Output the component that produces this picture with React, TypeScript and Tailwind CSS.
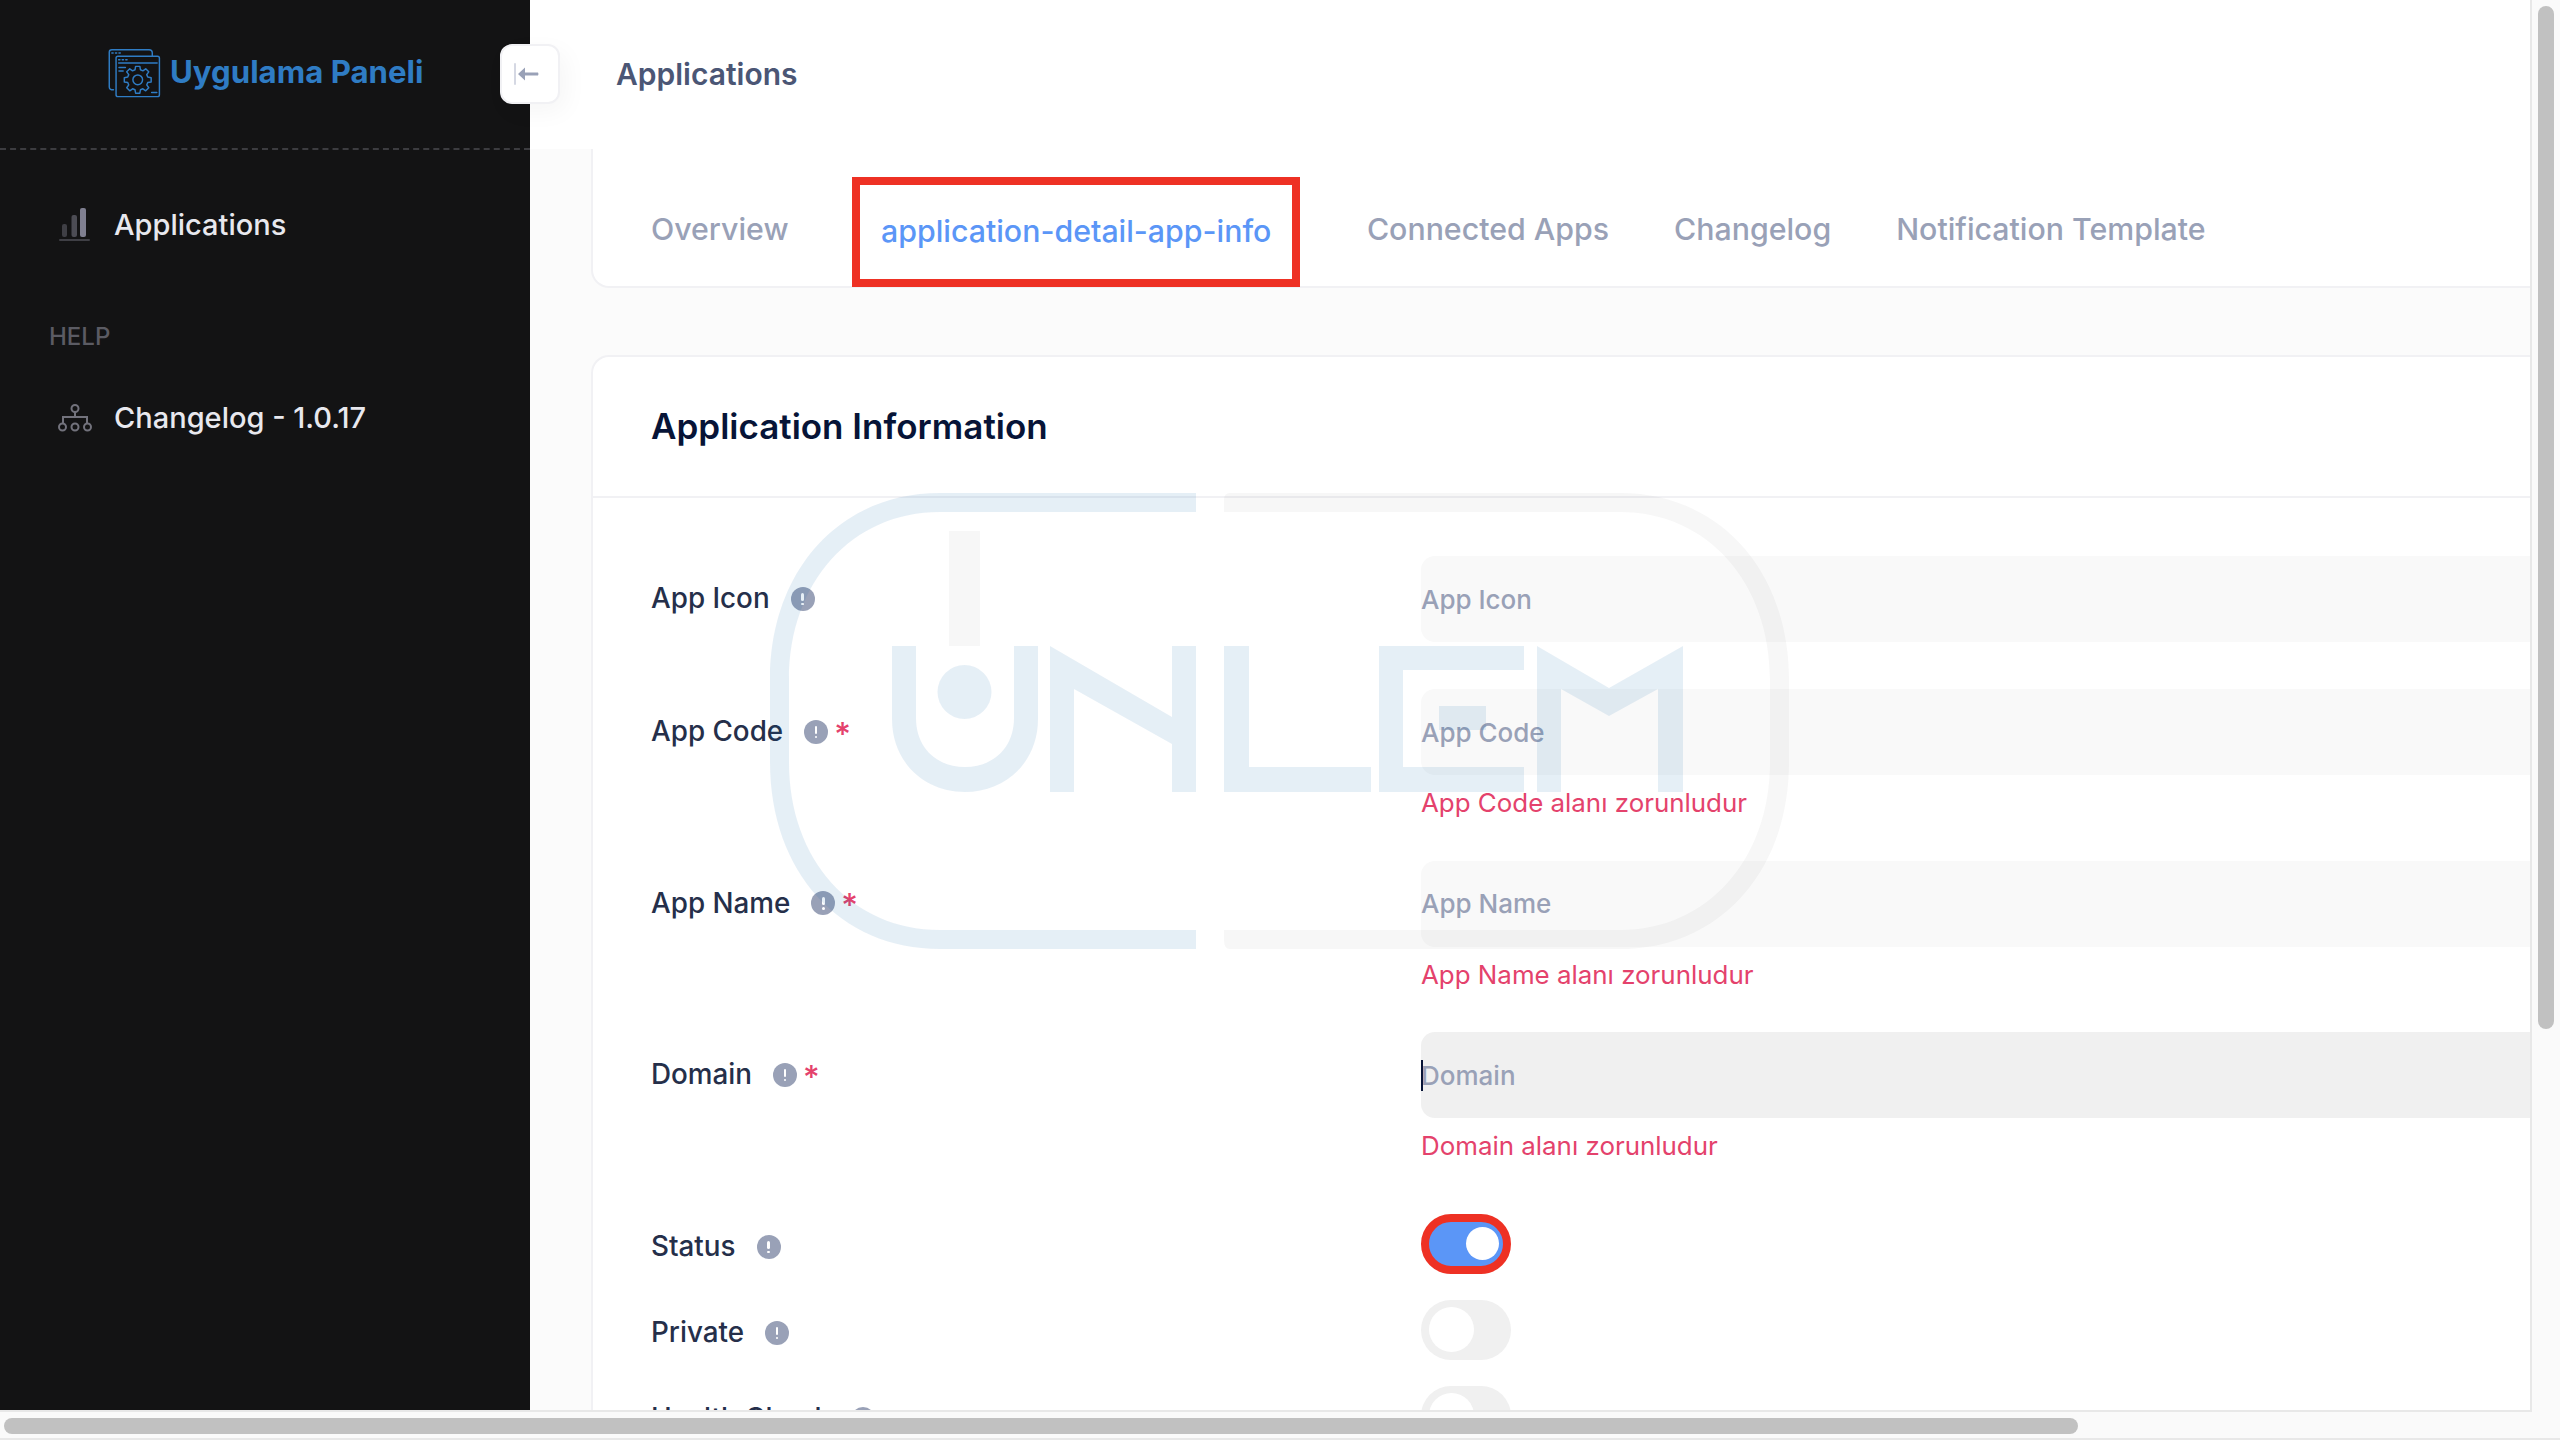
import React from "react";

const gearPoints = (() => {
  const pts: string[] = [];
  const cx = 145, cy = 153, teeth = 8;
  for (let i = 0; i < teeth; i++) {
    const a = (i / teeth) * Math.PI * 2 - Math.PI / 2;
    const step = (Math.PI * 2) / teeth;
    const add = (off: number, r: number) => pts.push(`${(cx + Math.cos(a + off * step) * r).toFixed(1)},${(cy + Math.sin(a + off * step) * r).toFixed(1)}`);
    add(-0.34, 32); add(-0.2, 42); add(0.2, 42); add(0.34, 32);
  }
  return pts.join(" ");
})();

function Logo() {
  return (
    <svg viewBox="50 52 170 160" width="55" height="52" fill="none" stroke="#2f7cc4" strokeWidth="4.5" strokeLinecap="round" strokeLinejoin="round" className="shrink-0">
      <path d="M190 78V70Q190 60 180 60H65Q57 60 57 68V175Q57 184 70 184" />
      <rect x="78" y="80" width="134" height="125" rx="6" />
      <path d="M86 101H205M87 115H107M87 126H100M188 192H204" />
      <path d="M65 70h4M76 70h4M87 70h4M86 91h4M97 91h4M108 91h4" />
      <polygon points={gearPoints} />
      <circle cx="145" cy="153" r="15" />
    </svg>
  );
}

function BarsIcon() {
  return (
    <svg width="31" height="34" viewBox="0 0 31 34" className="shrink-0">
      <rect x="3" y="16" width="5" height="13" rx="2" fill="#3f3f45" />
      <rect x="12.5" y="7" width="5.5" height="22" rx="2" fill="#4c4c54" />
      <rect x="21" y="0" width="6" height="29" rx="2" fill="#7f7f90" />
      <rect x="0" y="31" width="31" height="2" rx="1" fill="#3f3f45" />
    </svg>
  );
}

function TreeIcon() {
  return (
    <svg width="36" height="28" viewBox="0 0 36 28" fill="none" stroke="#72727c" strokeWidth="2" className="shrink-0">
      <circle cx="18" cy="4.5" r="3.5" />
      <path d="M18 8V13M6 19V13H30V19" />
      <circle cx="5.5" cy="23" r="3.5" />
      <circle cx="18" cy="23" r="3.5" />
      <circle cx="30.5" cy="23" r="3.5" />
    </svg>
  );
}

function Info() {
  return (
    <span className="flex h-6 w-6 shrink-0 items-center justify-center rounded-full bg-[#99a1b7]">
      <span className="flex flex-col items-center gap-[2px]">
        <span className="h-[8px] w-[2.5px] rounded-full bg-white" />
        <span className="h-[2.5px] w-[2.5px] rounded-full bg-white" />
      </span>
    </span>
  );
}

function Label({ text, required }: { text: string; required?: boolean }) {
  return (
    <div className="flex items-center text-[27.8px] font-medium text-[#252f4a]">
      <span>{text}</span>
      <span className="ml-[21px]"><Info /></span>
      {required && <span className="ml-[6px] h-[30px] text-[32px] leading-[36px] text-[#e4426c]">*</span>}
    </div>
  );
}

function Row({ label, required, focused, error }: { label: string; required?: boolean; focused?: boolean; error?: string }) {
  return (
    <div className="flex">
      <div className="flex h-[86px] w-[770px] shrink-0 items-center pb-[0.5px]"><Label text={label} required={required} /></div>
      <div className="flex-1">
        <div className={`relative flex h-[86px] items-center rounded-l-[14px] text-[26px] font-medium text-[#99a1b7] ${focused ? "bg-[#f0f0f0]" : "bg-[#f9f9f9]"}`}>
          {focused && <span className="absolute left-0 top-[28px] h-[31px] w-[2px] bg-[#071437]" />}
          {label}
        </div>
        {error && <div className="h-[38.6px] pt-[10px] text-[25.9px] leading-[36px] text-[#e4426c]">{error}</div>}
      </div>
    </div>
  );
}

function Toggle({ label, on }: { label: string; on?: boolean }) {
  return (
    <div className="flex">
      <div className="flex h-[60px] w-[770px] shrink-0 items-center pt-[6px]"><Label text={label} /></div>
      {on ? (
        <div className="flex h-[60px] w-[90px] items-center justify-end rounded-full border-[8px] border-[#ee3124] bg-[#5b96f7] pr-[4px]">
          <span className="h-[33px] w-[33px] rounded-full bg-white" />
        </div>
      ) : (
        <div className="flex h-[60px] w-[90px] items-center rounded-full bg-[#f0f0f0] pl-[8px]">
          <span className="h-[45px] w-[45px] rounded-full bg-white" />
        </div>
      )}
    </div>
  );
}

function Watermark() {
  const blue = "rgba(0,100,170,0.1)";
  return (
    <svg className="pointer-events-none absolute left-[240px] top-[493px]" width="1030" height="460" viewBox="770 493 1030 460">
      <path fill={blue} fillRule="evenodd" d="M1196 493H940C840 493 770 570 770 680V762C770 872 840 949 940 949H1196V930H940C852 930 789 860 789 762V680C789 582 852 512 940 512H1196Z" />
      <path fill="rgba(40,40,40,0.04)" fillRule="evenodd" d="M1230 493H1620C1719 493 1789 570 1789 680V762C1789 872 1719 949 1620 949H1230Q1224 949 1224 940V930H1620C1707 930 1770 860 1770 762V680C1770 582 1707 512 1620 512H1224V500Q1224 493 1230 493Z" />
      <rect x="949" y="531" width="31" height="115" fill="rgba(40,40,40,0.04)" />
      <g fill={blue}>
        <circle cx="964.5" cy="692" r="27" />
        <path d="M892 646H916V718C916 748 937 767 965 767C993 767 1014 748 1014 718V646H1038V719C1038 762 1006 792 965 792C924 792 892 762 892 719Z" />
        <path d="M1050 646L1172 717V646H1196V792H1172V744L1074 689V792H1050Z" />
        <path d="M1224 646H1249V767H1371V792H1224Z" />
        <path d="M1379 646H1524V670H1403V767H1524V792H1379Z" />
        <rect x="1439" y="706" width="47" height="24" />
        <path d="M1537 646L1609 688L1683 646V792H1658V689L1609 716L1561 689V792H1537Z" />
      </g>
    </svg>
  );
}

export default function App() {
  return (
    <div className="flex h-screen w-full flex-col overflow-hidden bg-[#fafafa] font-['Inter',sans-serif]">
      <div className="flex h-[1412px] shrink-0">
        <div className="flex h-full w-[2532px] shrink-0 overflow-hidden border-r-2 border-b-2 border-[#e8e8e8]">
          <aside className="flex w-[530px] shrink-0 flex-col bg-[#131314]">
            <div className="flex h-[150px] shrink-0 items-center gap-[8px] border-b-2 border-dashed border-[#3c3c40] pb-[3px] pl-[107px]">
              <Logo />
              <span className="text-[31.2px] font-bold text-[#2f7cc4]">Uygulama Paneli</span>
            </div>
            <div className="mt-[58px] flex h-[34px] items-center gap-[24px] pl-[59px] text-[29px] font-medium text-[#e8e8ee]">
              <BarsIcon />
              <span>Applications</span>
            </div>
            <div className="mt-[79px] pl-[49px] text-[24px] font-medium leading-[32px] text-[#5b5b63]">HELP</div>
            <div className="mt-[51px] flex h-[28px] items-center gap-[21px] pl-[57px] text-[29px] font-medium text-[#e8e8ee]">
              <TreeIcon />
              <span>Changelog - 1.0.17</span>
            </div>
          </aside>
          <main className="relative min-w-0 flex-1 bg-[#fbfbfb]">
            <header className="flex h-[149px] items-center bg-white pl-[86px] text-[30px] font-semibold text-[#4b5675]">Applications</header>
            <button className="absolute -left-[30px] top-[44px] z-10 flex h-[60px] w-[60px] items-center justify-center rounded-[12px] border-2 border-[#f1f1f4] bg-white shadow-[6px_8px_24px_rgba(0,0,0,0.04)]">
              <svg width="26" height="22" viewBox="0 0 26 22" className="mr-[6px]">
                <rect x="0" y="0" width="2" height="22" rx="1" fill="#d5d8e3" />
                <path d="M4 11L11 4.5V9.5H24Q25 11 24 12.5H11V17.5Z" fill="#99a1b7" />
              </svg>
            </button>
            <div className="-mr-[40px] ml-[61px]">
              <div className="flex h-[139px] items-start rounded-b-[18px] border-x-2 border-b-2 border-[#f1f1f4] bg-white pl-[58px] pt-[28px] text-[30.3px] font-medium text-[#99a1b7]">
                <div className="flex items-center gap-[65px]">
                  <span className="-mt-[4px]">Overview</span>
                  <span className="-ml-[1.5px] mr-[1.5px] flex h-[110px] items-center border-[8px] border-[#ee3124] px-[21px] text-[#5b96f7]">application-detail-app-info</span>
                  <span className="-mt-[4px]">Connected Apps</span>
                  <span className="-mt-[4px]">Changelog</span>
                  <span className="-mt-[4px]">Notification Template</span>
                </div>
              </div>
              <div className="mt-[67px] rounded-t-[18px] border-x-2 border-t-2 border-[#f1f1f4] bg-white">
                <div className="flex h-[141px] items-center border-b-2 border-[#f1f1f4] pl-[58px] text-[35px] font-semibold text-[#071437]">Application Information</div>
                <div className="flex flex-col pl-[58px] pt-[58px]">
                  <div className="flex flex-col gap-[47px]">
                    <Row label="App Icon" />
                    <Row label="App Code" required error="App Code alanı zorunludur" />
                    <Row label="App Name" required error="App Name alanı zorunludur" />
                    <Row label="Domain" required focused error="Domain alanı zorunludur" />
                  </div>
                  <div className="mt-[57px] flex flex-col gap-[26px]">
                    <Toggle label="Status" on />
                    <Toggle label="Private" />
                    <Toggle label="Health Check" />
                  </div>
                </div>
              </div>
            </div>
            <Watermark />
          </main>
        </div>
        <div className="flex-1 pl-[6px] pt-[6px]">
          <div className="h-[1023px] w-[16px] rounded-full bg-[#c1c1c1]" />
        </div>
      </div>
      <div className="flex-1 border-b-2 border-[#e8e8e8] pl-[4px] pt-[6px]">
        <div className="h-[16px] w-[2074px] rounded-full bg-[#c1c1c1]" />
      </div>
    </div>
  );
}
